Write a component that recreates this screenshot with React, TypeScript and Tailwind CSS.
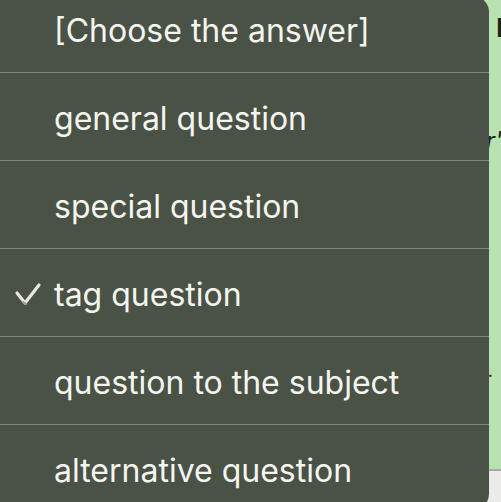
import React from "react"

const options = [
  "[Choose the answer]",
  "general question",
  "special question",
  "tag question",
  "question to the subject",
  "alternative question",
]

const selected = "tag question"

function Check() {
  return (
    <svg width="28" height="24" viewBox="0 0 28 24" className="shrink-0">
      <path d="M3 11 L11 21 L25 3" fill="none" stroke="#e6e8e2" strokeWidth="3.2" strokeLinecap="round" strokeLinejoin="round" />
      <path d="M9 20 L12 22" fill="none" stroke="#9aa094" strokeWidth="2" strokeLinecap="round" />
    </svg>
  )
}

export default function App() {
  return (
    <div className="relative w-[501px] h-[502px] overflow-hidden bg-[#b9e2b2]" style={{ fontFamily: "Inter, 'Noto Sans', sans-serif" }}>
      {/* page content underneath the menu */}
      <div className="flex flex-col h-full">
        <div className="h-[469px] pl-[484px] text-[#1c241a]">
          <div className="pt-[15px] pl-[12px] text-[26px] leading-none font-semibold">I</div>
          <div className="pt-[88px] pl-[2px] text-[24px] italic leading-none">r'</div>
          <div className="pt-[212px] pl-[4px] text-[14px] leading-none font-bold">.</div>
        </div>
        <div className="flex-1 border-t-2 border-[#a6a8a4] bg-[#ebebea]" />
      </div>

      {/* dropdown menu */}
      <div className="absolute left-0 top-[-4px] w-[489px] h-[514px] overflow-hidden rounded-r-[16px] bg-[#4a5246]">
        <div className="-mt-[11px] flex flex-col">
          {options.map((o, i) => (
            <div
              key={o}
              className={`flex items-center h-[88px] shrink-0 ${i < options.length - 1 ? "border-b border-[#7d8578]" : ""}`}
            >
              <div className="w-[54px] flex justify-center pl-[2px] pt-[2px]">{o === selected && <Check />}</div>
              <span className="pt-[4px] text-[32px] leading-none text-[#f4f5f0] whitespace-nowrap">{o}</span>
            </div>
          ))}
        </div>
      </div>
    </div>
  )
}
